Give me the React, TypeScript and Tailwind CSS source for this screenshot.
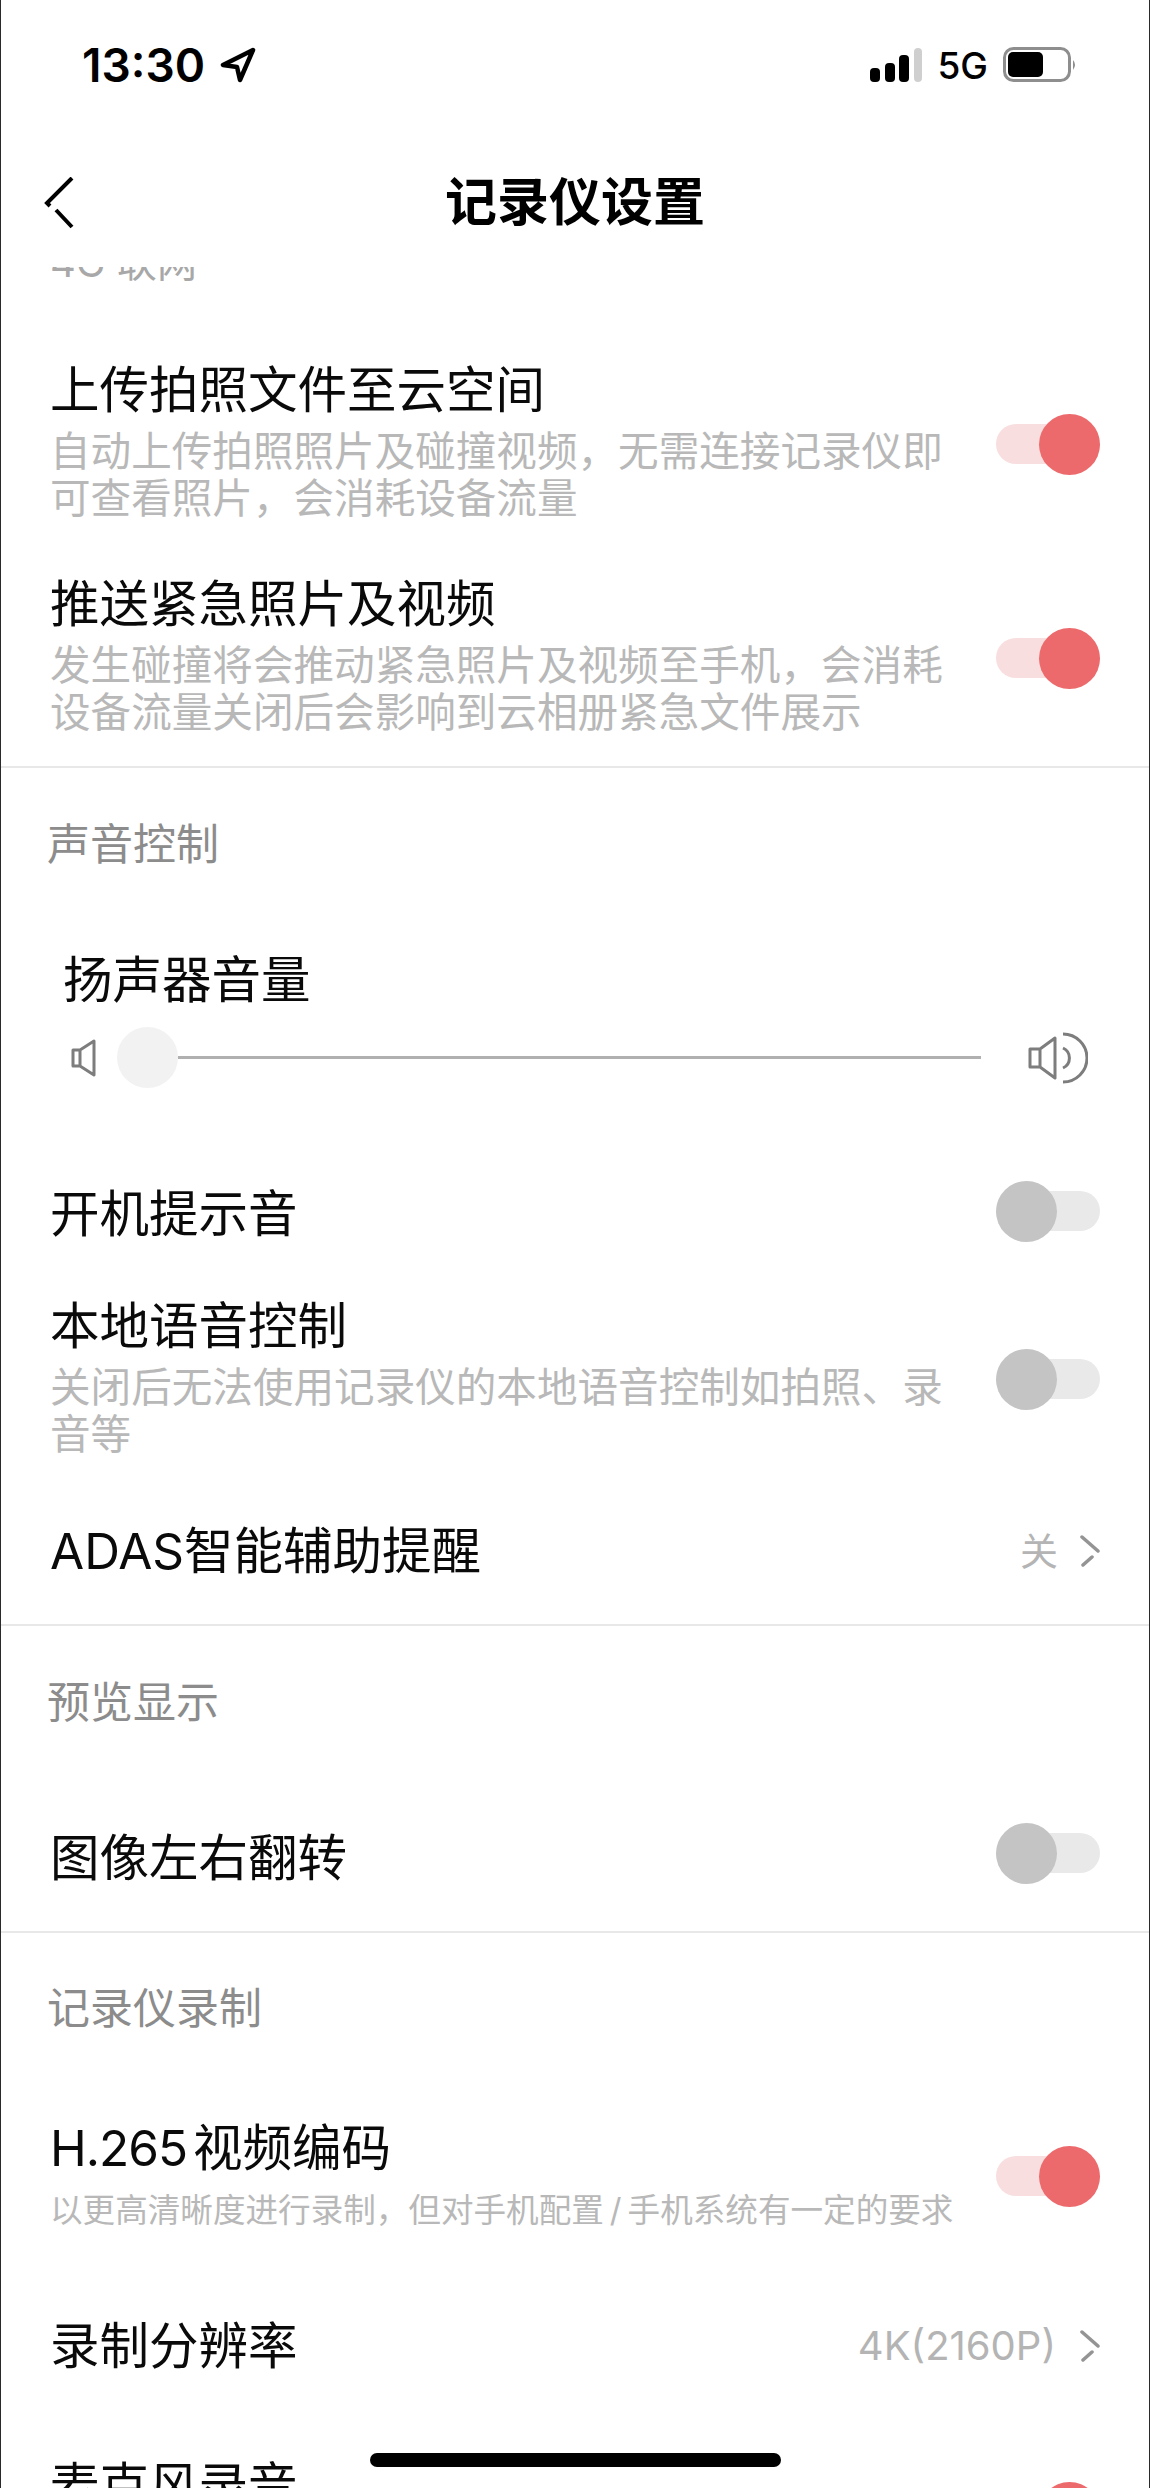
import type { ReactNode } from 'react';

const font = { fontFamily: '"Inter", "Noto Sans CJK SC", sans-serif' };

function Toggle({ on, className = '' }: { on?: boolean; className?: string }) {
  return (
    <div className={`relative h-[61px] w-[104px] shrink-0 ${className}`}>
      <div
        className={`absolute left-0 right-0 top-[10px] h-[40px] rounded-full ${
          on ? 'bg-[#f8dedf]' : 'bg-[#e9e9e9]'
        }`}
      />
      <div
        className={`absolute top-0 h-[61px] w-[61px] rounded-full ${
          on ? 'right-0 bg-[#ed6a6c]' : 'left-0 bg-[#c4c4c4]'
        }`}
      />
    </div>
  );
}

function Title({ children }: { children: ReactNode }) {
  return <div className="text-[49.5px] leading-[60px] text-[#0a0a0a]">{children}</div>;
}

function Sub({ children }: { children: ReactNode }) {
  return <div className="mt-[8px] w-[905px] text-[40.6px] leading-[47px] text-[#b8b8b8]">{children}</div>;
}

function Section({ children, className = '' }: { children: ReactNode; className?: string }) {
  return <div className={`pl-[46px] text-[43px] leading-[50px] text-[#8c8c8c] ${className}`}>{children}</div>;
}

function Divider({ className = '' }: { className?: string }) {
  return <div className={`h-[2px] bg-[#e8e8e8] ${className}`} />;
}

function Chevron() {
  return (
    <svg width="20" height="32" viewBox="0 0 20 32" fill="none" stroke="#949494" strokeWidth="3.5" strokeLinecap="round">
      <path d="M2 2 L18 16 M12 22 L3 30" />
    </svg>
  );
}

export default function App() {
  return (
    <div style={font} className="relative h-[2488px] w-[1150px] overflow-hidden border-x border-[#2a2a2a] bg-white">
      {/* status bar */}
      <div className="flex h-[130px] items-center justify-between pl-[81px] pr-[72px]">
        <div className="flex items-center gap-[15px]">
          <span className="text-[46px] font-semibold leading-none text-black">13:30</span>
          <svg width="36" height="36" viewBox="0 0 36 36" fill="none" stroke="#000" strokeWidth="4.5" strokeLinejoin="round">
            <path d="M33 3 L3 18 L17 20 L20 33 Z" />
          </svg>
        </div>
        <div className="flex items-center">
          <svg width="52" height="34" viewBox="0 0 52 34" fill="#000">
            <rect x="0" y="20" width="10" height="14" rx="4" />
            <rect x="15" y="15" width="10" height="19" rx="4" />
            <rect x="29" y="7" width="10" height="27" rx="4" />
            <rect x="44" y="0" width="8" height="34" rx="4" fill="#cfcfcf" />
          </svg>
          <span className="ml-[15px] text-[37px] font-medium leading-none text-black">5G</span>
          <svg className="ml-[15px]" width="74" height="36" viewBox="0 0 74 36" fill="none">
            <rect x="1.5" y="1.5" width="65" height="32" rx="9" stroke="#8e8e8e" strokeWidth="3" />
            <rect x="5" y="5" width="35" height="25" rx="5" fill="#000" />
            <path d="M70 13 Q74 17.5 70 23 Z" fill="#8e8e8e" />
          </svg>
        </div>
      </div>

      {/* nav */}
      <div className="grid h-[137px] grid-cols-[1fr_auto_1fr] items-start px-[43px]">
        <svg className="mt-[47px]" width="30" height="52" viewBox="0 0 30 52" fill="none" stroke="#000" strokeWidth="4">
          <path d="M28 1 L3 26 L6 29 M12 33 L28 50" />
        </svg>
        <div className="mt-[43px] text-[52px] font-bold leading-[60px] text-black">记录仪设置</div>
        <div />
      </div>

      {/* scrolled list, clipped under the nav */}
      <div className="overflow-hidden">
        <div className="-mt-[28px] pl-[49px] text-[40px] leading-[47px] text-[#a8a8a8]">4G 联网</div>

        <div className="mt-[74px] flex items-start justify-between px-[49px]">
          <div>
            <Title>上传拍照文件至云空间</Title>
            <Sub>自动上传拍照照片及碰撞视频，无需连接记录仪即可查看照片，会消耗设备流量</Sub>
          </div>
          <Toggle on className="mt-[54px]" />
        </div>

        <div className="mt-[52px] flex items-start justify-between px-[49px]">
          <div>
            <Title>推送紧急照片及视频</Title>
            <Sub>发生碰撞将会推动紧急照片及视频至手机，会消耗设备流量关闭后会影响到云相册紧急文件展示</Sub>
          </div>
          <Toggle on className="mt-[54px]" />
        </div>

        <Divider className="mt-[30px]" />
        <Section className="mt-[51px]">声音控制</Section>

        <div className="mt-[81px] pl-[62px]">
          <Title>扬声器音量</Title>
        </div>
        <div className="mt-[17px] flex items-center pl-[69px] pr-[61px]">
          <svg width="26" height="38" viewBox="0 0 26 38" fill="none" stroke="#7d7d7d" strokeWidth="3" strokeLinejoin="round">
            <path d="M24 2 L10 11 H3 V27 H10 L24 36 Z M10 11 V27" />
          </svg>
          <div className="ml-[21px] h-[61px] w-[61px] shrink-0 rounded-full bg-[#f2f2f2]" />
          <div className="h-[3px] flex-1 bg-[#b0b0b0]" />
          <svg className="ml-[47px]" width="60" height="52" viewBox="0 0 60 52" fill="none" stroke="#7d7d7d" strokeWidth="3" strokeLinejoin="round">
            <path d="M27 6 L12 17 H2 V35 H12 L27 46 Z M12 17 V35" />
            <path d="M35 16 A11 11 0 0 1 35 36" />
            <path d="M35 2 A24 24 0 0 1 35 50" />
          </svg>
        </div>

        <div className="mt-[96px] flex items-start justify-between px-[49px]">
          <Title>开机提示音</Title>
          <Toggle className="-mt-[3px]" />
        </div>

        <div className="mt-[52px] flex items-start justify-between px-[49px]">
          <div>
            <Title>本地语音控制</Title>
            <Sub>关闭后无法使用记录仪的本地语音控制如拍照、录音等</Sub>
          </div>
          <Toggle className="mt-[53px]" />
        </div>

        <div className="mt-[63px] flex items-center justify-between px-[49px]">
          <Title>ADAS智能辅助提醒</Title>
          <div className="flex items-center gap-[22px] text-[38px] leading-[60px] text-[#b4b4b4]">
            关
            <Chevron />
          </div>
        </div>

        <Divider className="mt-[43px]" />
        <Section className="mt-[51px]">预览显示</Section>

        <div className="mt-[101px] flex items-start justify-between px-[49px]">
          <Title>图像左右翻转</Title>
          <Toggle className="-mt-[5px]" />
        </div>

        <Divider className="mt-[43px]" />
        <Section className="mt-[50px]">记录仪录制</Section>

        <div className="mt-[85px] flex items-start justify-between px-[49px]">
          <div>
            <Title>
              <span className="tracking-[-1px]">H.265</span>
              <span className="ml-[6px]">视频编码</span>
            </Title>
            <div className="mt-[12px] w-[930px] text-[32.6px] leading-[40px] text-[#b8b8b8]">
              以更高清晰度进行录制，但对手机配置<span className="mx-[6px]">/</span>手机系统有一定的要求
            </div>
          </div>
          <Toggle on className="mt-[28px]" />
        </div>

        <div className="mt-[86px] flex items-center justify-between px-[49px]">
          <Title>录制分辨率</Title>
          <div className="flex items-center gap-[24px] text-[40px] leading-[60px] text-[#b4b4b4]">
            4K(2160P)
            <Chevron />
          </div>
        </div>

        <div className="mt-[80px] flex items-start justify-between px-[49px]">
          <Title>麦克风录音</Title>
          <Toggle on className="mt-[26px]" />
        </div>
      </div>

      {/* home indicator */}
      <div className="absolute bottom-[21px] left-[369px] h-[14px] w-[411px] rounded-full bg-black" />
    </div>
  );
}
